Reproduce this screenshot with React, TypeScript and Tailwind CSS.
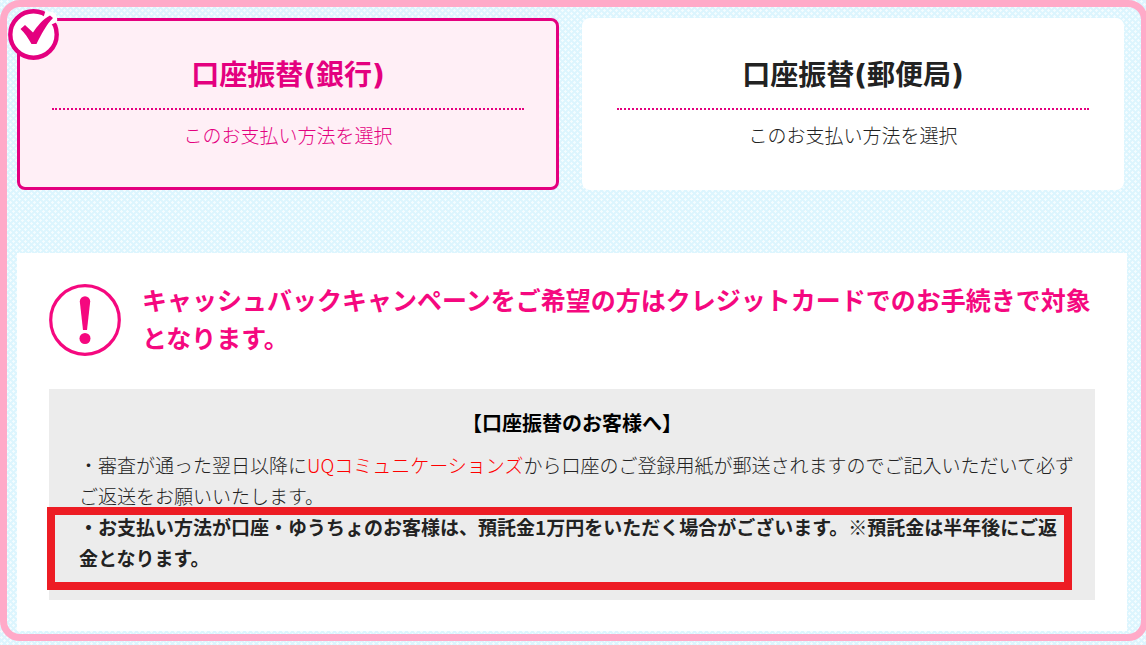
import { useState } from 'react'
import clsx from 'clsx'

const methods = [
  { id: 'bank', title: '口座振替(銀行)' },
  { id: 'post', title: '口座振替(郵便局)' },
]

function CheckBadge() {
  return (
    <svg viewBox="0 0 51 51" className="absolute -left-3 -top-3 size-[51px]" aria-hidden="true">
      <circle cx="25.500" cy="25.500" r="23.200" fill="#fff" stroke="#e4007f" strokeWidth="4.400" />
      <path d="M35.500 8 37.500 2 45 3Q50 6 49 13L43.500 15.500Z" fill="#fff" />
      <path
        d="M12.500 20 17 16 25 23.500C29 17.500 35 10 42 6.500L45 9C38 16 33.500 25 28.500 35H23.500C20 29 17 24 12.500 20Z"
        fill="#e4007f"
      />
    </svg>
  )
}

function AlertIcon() {
  return (
    <svg viewBox="0 0 72 72" className="size-[72px] shrink-0" aria-hidden="true">
      <circle cx="36" cy="36" r="34.300" fill="none" stroke="#f5087f" strokeWidth="3.200" />
      <path d="M30.800 17.500a5.200 5.200 0 0 1 10.400 0L38 46h-4Z" fill="#f5087f" />
      <circle cx="36" cy="54.500" r="5.500" fill="#f5087f" />
    </svg>
  )
}

export default function App() {
  const [selected, setSelected] = useState('bank')

  return (
    <div className="min-h-screen overflow-hidden bg-[#dcf5fe] bg-[radial-gradient(circle_at_25%_25%,#f3fcff_1px,transparent_1.5px),radial-gradient(circle_at_75%_75%,#f3fcff_1px,transparent_1.5px)] bg-size-[6px_6px] pb-1 font-['Noto_Sans_CJK_JP',sans-serif] text-[#222]">
      <main className="-mr-0.5 rounded-[20px] border-[7px] border-[#ffaac8] pt-[11px] pr-3.5 pb-[3px] pl-2.5">
        <div className="mr-[3px] grid grid-cols-2 gap-[23px]">
          {methods.map((method) => {
            const active = selected === method.id
            return (
              <label
                key={method.id}
                className={clsx(
                  'relative block cursor-pointer rounded-lg border-[3px] px-8 pt-[34px] pb-[37px] text-center',
                  active ? 'border-[#e4007f] bg-[#ffeff6] text-[#e4007f]' : 'border-white bg-white',
                )}
              >
                <input
                  type="radio"
                  name="payment"
                  value={method.id}
                  checked={active}
                  onChange={() => setSelected(method.id)}
                  className="sr-only"
                />
                {active && <CheckBadge />}
                <span className="block border-b-2 border-dotted border-[#e4007f] pb-[11px] font-['DejaVu_Sans','Noto_Sans_CJK_JP',sans-serif] text-[28px] leading-[42px] font-bold">
                  {method.title}
                </span>
                <span className="block pt-2.5 text-[19px] leading-[30px] font-light">このお支払い方法を選択</span>
              </label>
            )
          })}
        </div>

        <section className="mt-[63px] bg-white px-8 py-[31px]">
          <div className="flex gap-[21px]">
            <AlertIcon />
            <h2 className="-mt-1 -mr-2 text-[25px] leading-[38px] font-bold text-[#f5087f]">
              キャッシュバックキャンペーンをご希望の方はクレジットカードでのお手続きで対象となります。
            </h2>
          </div>

          <div className="mt-[33px] bg-[#ececec] px-[30px] pt-[18px] pb-[27px] text-[19px] leading-[31px]">
            <h3 className="mb-[11px] text-center text-[20px] leading-[31px] font-bold text-black">
              【口座振替のお客様へ】
            </h3>
            <p className="-mr-4 font-light">
              ・審査が通った翌日以降に<span className="text-[#f00]">UQコミュニケーションズ</span>
              から口座のご登録用紙が郵送されますのでご記入いただいて必ず
              <br />
              ご返送をお願いいたします。
            </p>
            <div className="relative">
              <p className="-mr-4 font-bold">
                ・お支払い方法が口座・ゆうちょのお客様は、預託金1万円をいただく場合がございます。※預託金は半年後にご返
                <br />
                金となります。
              </p>
              <div className="pointer-events-none absolute -top-1 -right-[7px] -bottom-[17px] -left-8 border-8 border-[#ed1c24]" />
            </div>
          </div>
        </section>
      </main>
    </div>
  )
}
